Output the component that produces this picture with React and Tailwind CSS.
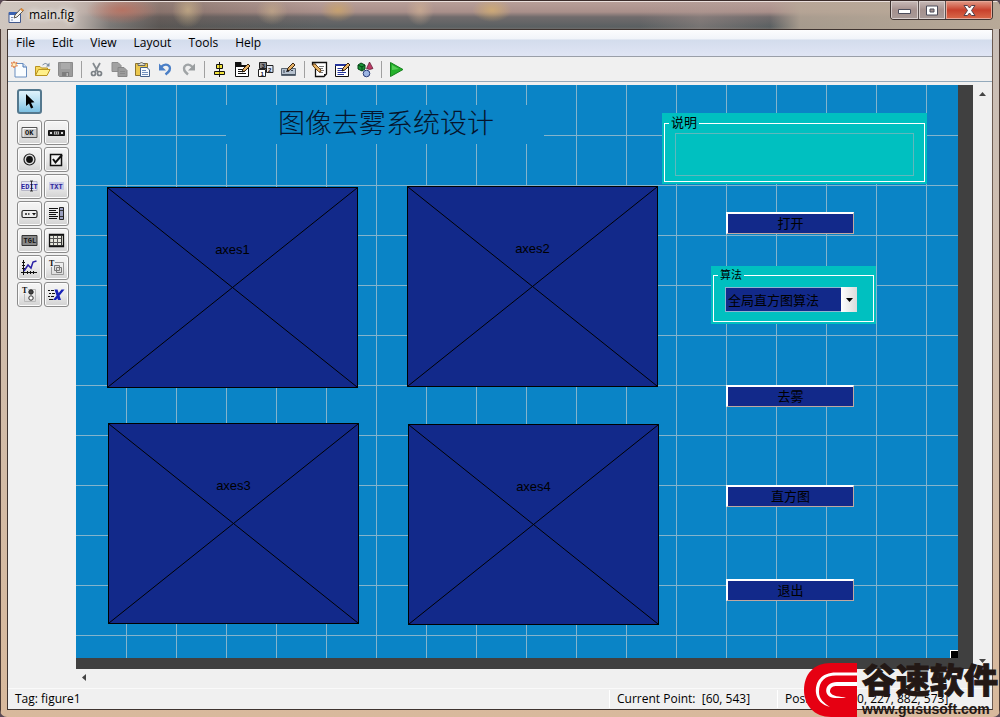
import React from "react";

const MENUS = ["File", "Edit", "View", "Layout", "Tools", "Help"];

function Icon({ children, size = 17 }) {
  return (
    <svg width={size} height={size} viewBox="0 0 17 17" fill="none" aria-hidden="true" className="shrink-0">
      {children}
    </svg>
  );
}

const Pencil = ({ x = 0, y = 0 }) => (
  <g transform={`translate(${x} ${y})`}>
    <path d="M1 9L2 6L7 1L9 3L4 8Z" fill="#e8b468" stroke="#3a2410" strokeWidth="1" />
    <path d="M1 9L1.5 7L3 8.5Z" fill="#111" />
  </g>
);

const ICONS = {
  new: (
    <Icon>
      <path d="M4 2.5H12L15.5 6V16H4Z" fill="#fafdff" stroke="#6a8fc0" />
      <path d="M12 2.5V6H15.5" fill="#d5e4f5" stroke="#4f78b4" />
      <path d="M3 .5L3.8 2.2L6 1.5L5 3.5L6.5 5L4 5L3 7L2.2 5L.3 5.3L1.3 3.5L.3 1.5L2.2 2.2Z" fill="#fff3c0" stroke="#df7a45" strokeWidth=".9" />
    </Icon>
  ),
  open: (
    <Icon>
      <path d="M1.5 14.5V5.5H6L7.5 7H13.5V9" fill="#f6d860" stroke="#b99420" />
      <path d="M1.5 14.5L4.5 8.5H16L13 14.5Z" fill="#fff08a" stroke="#b99420" />
      <path d="M8.5 4Q11 1 14 3.5" stroke="#7e8ea0" />
      <path d="M15.5 1.5V5.5H12Z" fill="#7e8ea0" />
    </Icon>
  ),
  save: (
    <Icon>
      <path d="M1.5 1.5H15.5V15.5H2.5L1.5 14.5Z" fill="#9c9c9c" stroke="#8b8b8b" />
      <path d="M4 2H13V8H4Z" fill="#ababab" />
      <path d="M5 11H12V15H5Z" fill="#7e7e7e" />
      <path d="M9.500 12H11V15H9.500Z" fill="#bbb" />
    </Icon>
  ),
  cut: (
    <Icon>
      <path d="M5 2L10 11M12 2L7 11" stroke="#858b90" strokeWidth="1.8" />
      <circle cx="5.500" cy="12.500" r="2" stroke="#7b8186" strokeWidth="1.700" />
      <circle cx="11.500" cy="12.500" r="2" stroke="#7b8186" strokeWidth="1.700" />
    </Icon>
  ),
  copy: (
    <Icon>
      <path d="M1 1.500H7L10 4.500V10.500H1Z" fill="#a2a2a2" stroke="#8c8c8c" />
      <path d="M7 6.500H13L16 9.500V15.500H7Z" fill="#9c9c9c" stroke="#868686" />
      <path d="M9 10.500H14M9 12.500H14" stroke="#8a8a8a" />
    </Icon>
  ),
  paste: (
    <Icon>
      <path d="M1.500 2.500H13.500V14.500H1.500Z" fill="#ecc84e" stroke="#8c7330" />
      <path d="M4 4.500V2.500H6L7.500 1L9 2.500H11V4.500Z" fill="#d8d8d0" stroke="#68685e" />
      <path d="M6.500 6.500H13L15.500 9V15.500H6.500Z" fill="#f7fbff" stroke="#46618b" />
      <path d="M8 9.500H12M8 11.500H14M8 13.500H14" stroke="#7390bd" />
    </Icon>
  ),
  undo: (
    <Icon>
      <path d="M4 6Q9 1.500 12.500 5.500Q14.500 9 8.500 13.500" stroke="#4b7fc6" strokeWidth="2.400" />
      <path d="M2 2.500V9.500H9Z" fill="#4b7fc6" />
    </Icon>
  ),
  redo: (
    <Icon>
      <path d="M12.500 6Q8 1.500 4.500 5.500Q2.500 9 8 13.500" stroke="#a0a4a6" strokeWidth="2.400" />
      <path d="M15 2.500V9.500H8Z" fill="#999d9f" />
    </Icon>
  ),
  align: (
    <Icon>
      <path d="M8.500 1V16" stroke="#111" />
      <path d="M5.500 3.500H11.500V7.500H5.500ZM3.500 10.500H13.500V13.500H3.500Z" fill="#f3e43c" stroke="#111" />
      <path d="M8.500 4V7M8.500 11V13" stroke="#6b6410" />
    </Icon>
  ),
  menuEdit: (
    <Icon>
      <path d="M1 1.500H7V4.500H14.500V15.500H1.500V1.500" fill="#fff" stroke="#111" />
      <path d="M1 2H7V5H14V6H1Z" fill="#111" />
      <path d="M4 8.500H9M4 10.500H11M4 12.500H12" stroke="#111" />
      <Pencil x={7} y={2} />
    </Icon>
  ),
  tab: (
    <Icon>
      <path d="M2.500 1.500H9.500V7.500H2.500Z" fill="#888" stroke="#222" />
      <path d="M9.500 4.500H16V11.500H9.500Z" fill="#e4eaf5" stroke="#222" />
      <path d="M1.500 8.500H8.500V15.500H1.500Z" fill="#fff" stroke="#222" />
      <text x="3.500" y="14.500" fill="#112" className="font-['Liberation_Sans'] text-[6px] font-bold">1</text>
      <text x="11" y="10.500" fill="#112" className="font-['Liberation_Sans'] text-[6px] font-bold">2</text>
      <text x="4.500" y="7" fill="#112" className="font-['Liberation_Sans'] text-[6px] font-bold">3</text>
    </Icon>
  ),
  toolbarEdit: (
    <Icon>
      <path d="M1.500 7.500H15.500V14.500H1.500Z" fill="#b7c2cf" stroke="#596572" />
      <path d="M2 13.500H15" stroke="#495561" />
      <path d="M4 9V12M6 10.500H9M11 9.500H13" stroke="#3d4856" />
      <Pencil x={6} y={1} />
    </Icon>
  ),
  mfile: (
    <Icon>
      <path d="M3.500 1.500H15.500V13L13 15.500H4.500V3.500H1.500V1.500Z" fill="#fff" stroke="#111" strokeWidth="1.300" />
      <path d="M13 15V13H15Z" fill="#111" />
      <path d="M8 5.500H13M8 7.500H12M8 9.500H13M8 11.500H12" stroke="#777" />
      <path d="M2 3L4 3L10 9L9.500 11L7.500 10.500L2 5Z" fill="#e6b566" stroke="#6c451a" />
    </Icon>
  ),
  property: (
    <Icon>
      <path d="M1.500 3.500H14.500V15.500H1.500Z" fill="#fff" stroke="#111" />
      <path d="M1 3H15V5H1Z" fill="#23349c" />
      <path d="M3.500 7.500H9M3.500 9.500H10M3.500 11.500H12M3.500 13.500H10" stroke="#23349c" />
      <Pencil x={7} y={1} />
    </Icon>
  ),
  objects: (
    <Icon>
      <path d="M1 4L4 2L8 4V8L5 10L1 8Z" fill="#189335" stroke="#064417" />
      <path d="M1 4L5 6L8 4M5 6V10" stroke="#064417" />
      <path d="M12.500 1L16 7.500Q12.500 9.500 9.500 7.500Z" fill="#bb3a65" stroke="#5b1830" strokeWidth=".7" />
      <circle cx="9.500" cy="12.500" r="3.300" fill="#9db6e4" stroke="#2b3e7b" />
    </Icon>
  ),
  run: (
    <Icon>
      <path d="M2.500 1.500L15 8.500L2.500 15.500Z" fill="#25b12c" stroke="#15811c" />
      <path d="M4 4L11 8L4 9Z" fill="#57cd56" />
    </Icon>
  ),
  arrow: (
    <Icon>
      <path d="M5 1V13L8 10.500L10 15.500L12.300 14.500L10 9.700L13.500 9.300Z" fill="#000" />
    </Icon>
  ),
  push: (
    <Icon>
      <path d="M1 3.500H16V13.500H1Z" fill="#ccc" stroke="#555" />
      <path d="M2 12.500V4.500H15" stroke="#fff" />
      <text x="4" y="11" fill="#111" className="font-['Liberation_Mono'] text-[7px] font-bold">OK</text>
    </Icon>
  ),
  slider: (
    <Icon>
      <path d="M.5 6.500H16.500V11.500H.5Z" fill="#222" stroke="#111" />
      <path d="M2 9H4M13 9H15" stroke="#ddd" strokeWidth="2" />
      <path d="M6 7.500H11V10.500H6Z" fill="#bbb" />
      <path d="M7.500 7.500V10.500M9.500 7.500V10.500" stroke="#555" />
    </Icon>
  ),
  radio: (
    <Icon>
      <circle cx="8.500" cy="8.500" r="5.500" fill="#ddd" stroke="#222" strokeWidth="1.200" />
      <circle cx="8.500" cy="8.500" r="3.400" fill="#111" />
    </Icon>
  ),
  check: (
    <Icon>
      <path d="M2.500 3.500H13.500V14.500H2.500Z" fill="#f5f5f5" stroke="#111" strokeWidth="1.500" />
      <path d="M5 8L7.500 11.500L14 4" stroke="#111" strokeWidth="2" />
    </Icon>
  ),
  edit: (
    <Icon>
      <path d="M.5 3.500H16V12.500H.5Z" fill="#e4e5f5" stroke="#b6b6c6" />
      <text x="0" y="11" fill="#2c249b" className="font-['Liberation_Mono'] text-[7px] font-bold">EDIT</text>
      <path d="M9 3H12M10.500 3V13M9 13H12" stroke="#111" strokeWidth=".8" />
    </Icon>
  ),
  text: (
    <Icon>
      <path d="M1 4H16V12H1Z" fill="#c9cae5" />
      <text x="2" y="11" fill="#2c249b" className="font-['Liberation_Mono'] text-[7px] font-bold">TXT</text>
    </Icon>
  ),
  popup: (
    <Icon>
      <rect x="1" y="5.500" width="15" height="7" rx="1.500" fill="#eee" stroke="#222" strokeWidth="1.200" />
      <path d="M4 9H6M7 9H8.500" stroke="#222" strokeWidth="1.500" />
      <path d="M11 8H15L13 10.500Z" fill="#111" />
    </Icon>
  ),
  list: (
    <Icon>
      <path d="M1 3.500H10M1 5.500H8M1 7.500H10M1 9.500H8M1 11.500H10M1 13.500H9" stroke="#111" />
      <path d="M11.500 2.500H15.500V14.500H11.500Z" fill="#9ba0bf" stroke="#222" />
      <path d="M12 5.500H15M12 11.500H15" stroke="#333" />
    </Icon>
  ),
  toggle: (
    <Icon>
      <path d="M1 3.500H16V13.500H1Z" fill="#888" stroke="#333" />
      <text x="2.500" y="11" fill="#111" className="font-['Liberation_Mono'] text-[7px] font-bold">TGL</text>
    </Icon>
  ),
  table: (
    <Icon>
      <path d="M1.500 2.500H15.500V14.500H1.500Z" fill="#e8e8df" stroke="#111" strokeWidth="1.300" />
      <path d="M5.500 3V14M9.500 3V14M2 6.500H13M2 10.500H13" stroke="#555" />
      <path d="M13.500 3V14M2 13.500H15M2 3.500H15" stroke="#333" />
    </Icon>
  ),
  axes: (
    <Icon>
      <path d="M2.500 1V16M0 13.500H16M1 3.500H4M1 6.500H4M1 9.500H4M6.500 12V15M9.500 12V15M12.500 12V15" stroke="#111" />
      <path d="M3 12L7 6L10 9L12 3L15.500 2" stroke="#2920a5" strokeWidth="1.500" />
    </Icon>
  ),
  panel: (
    <Icon>
      <path d="M7 3.500H15.500V15.500H3.500V8" stroke="#999" />
      <path d="M6.500 6.500H11.500V11.500H6.500ZM8.500 8.500H13.500V13.500H8.500Z" fill="#ddd" stroke="#777" />
      <text x="1" y="6.500" fill="#111" className="font-['Liberation_Serif'] text-[8px] font-bold">T</text>
    </Icon>
  ),
  group: (
    <Icon>
      <path d="M7 3.500H14.500V15.500H3.500V8" stroke="#bbb" />
      <circle cx="10" cy="6" r="2.200" fill="#444" stroke="#222" />
      <circle cx="10" cy="12" r="2.200" fill="#fff" stroke="#333" />
      <text x="1" y="6.500" fill="#111" className="font-['Liberation_Serif'] text-[8px] font-bold">T</text>
    </Icon>
  ),
  activex: (
    <Icon>
      <path d="M0 4.500H2M3 4.500H6M1 7.500H3M4 7.500H7M0 10.500H2M3 10.500H6M1 13.500H5" stroke="#111" strokeWidth="1.200" />
      <path d="M6.500 3.500H9.500L13 14H10ZM13.500 3.500H16.500L8 14H5Z" fill="#1822b8" />
    </Icon>
  ),
};

const TOOLBAR = [
  [["new", "New"], ["open", "Open"], ["save", "Save"]],
  [["cut", "Cut"], ["copy", "Copy"], ["paste", "Paste"], ["undo", "Undo"], ["redo", "Redo"]],
  [["align", "Align Objects"], ["menuEdit", "Menu Editor"], ["tab", "Tab Order Editor"], ["toolbarEdit", "Toolbar Editor"]],
  [["mfile", "M-file Editor"], ["property", "Property Inspector"], ["objects", "Object Browser"]],
  [["run", "Run Figure"]],
];

const PALETTE = [
  ["push", "Push Button"], ["slider", "Slider"],
  ["radio", "Radio Button"], ["check", "Check Box"],
  ["edit", "Edit Text"], ["text", "Static Text"],
  ["popup", "Pop-up Menu"], ["list", "Listbox"],
  ["toggle", "Toggle Button"], ["table", "Table"],
  ["axes", "Axes"], ["panel", "Panel"],
  ["group", "Button Group"], ["activex", "ActiveX Control"],
];

function TitleBar() {
  return (
    <header className="flex h-[29px] shrink-0 items-start justify-between border-t border-[#3b2c2a] bg-[radial-gradient(ellipse_36px_14px_at_122px_9px,#b96c5acc_0%,transparent_100%),radial-gradient(ellipse_16px_18px_at_188px_9px,#d0b78aaa_0%,transparent_100%),radial-gradient(ellipse_16px_14px_at_272px_10px,#cbb08a99_0%,transparent_100%),radial-gradient(ellipse_18px_12px_at_338px_9px,#d3a962aa_0%,transparent_100%),radial-gradient(ellipse_14px_16px_at_420px_9px,#d1b193aa_0%,transparent_100%),radial-gradient(ellipse_20px_12px_at_492px_9px,#d8b16ebb_0%,transparent_100%),linear-gradient(90deg,#cfc6bf_0,#c9beb7_70px,#a89c9466_110px,#57483f66_160px,transparent_320px),linear-gradient(180deg,transparent_15px,#b8a99800_15px,#b8a99800_100%),linear-gradient(90deg,transparent_640px,#b09c9555_700px,transparent_770px,#b8a998cc_800px,#b8a998_100%),linear-gradient(180deg,#b9a09a_0,#a98f8a_11px,#716b6c_16px,#5a6062_26px,#77716e_29px)] pl-2 pr-[7px] shadow-[inset_0_1px_0_#eadfdc]">
      <div className="flex h-full items-center gap-1 text-[12px] text-black">
        <svg width="17" height="17" viewBox="0 0 17 17" fill="none" aria-hidden="true">
          <path d="M1 5.500H12.500V15.500H1Z" fill="#f5f8ff" stroke="#42598c" />
          <path d="M1 5H13V8H1Z" fill="#3b62b0" />
          <path d="M3 10.500H5M3 13H5" stroke="#7a8db5" />
          <path d="M6 11L7 8L13 1.500L15.500 3.500L9 10Z" fill="#f4f1ea" stroke="#5c574f" />
          <path d="M12 2.500L13.500 1L16 3L14.500 4.500Z" fill="#dd8b3b" />
        </svg>
        <span className="[text-shadow:0_0_6px_#fff,0_0_6px_#fff]">main.fig</span>
      </div>
      <div className="flex h-[19px] overflow-hidden rounded-b-[4px] border border-t-0 border-[#3f3432]">
        <button aria-label="Minimize" className="flex w-[28px] items-center justify-center border-r border-[#5b504f] bg-linear-to-b from-[#c8bab8] via-[#a5918e] to-[#a99b98] shadow-[inset_0_0_0_1px_#d9cfcd]">
          <svg width="13" height="7" viewBox="0 0 13 7" aria-hidden="true"><path d="M.5 2.500H12.500V6.500H.5Z" fill="#fff" stroke="#4c4c5a" /></svg>
        </button>
        <button aria-label="Maximize" className="flex w-[27px] items-center justify-center border-r border-[#5b504f] bg-linear-to-b from-[#c8bab8] via-[#a5918e] to-[#a99b98] shadow-[inset_0_0_0_1px_#d9cfcd]">
          <svg width="13" height="11" viewBox="0 0 13 11" fill="none" aria-hidden="true">
            <path d="M.5 1H11.500V10H.5Z" fill="#fff" stroke="#4c4c5a" />
            <path d="M4 4H8V7H4Z" fill="#a5918e" stroke="#4c4c5a" />
          </svg>
        </button>
        <button aria-label="Close" className="flex w-[46px] items-center justify-center bg-linear-to-b from-[#e09a88] via-[#c8402c] to-[#d9694a] shadow-[inset_0_0_0_1px_#e8a898]">
          <svg width="13" height="11" viewBox="0 0 13 11" aria-hidden="true">
            <path d="M1 .5H4.500L6.500 3L8.500 .5H12L8.500 5.500L12 10.500H8.500L6.500 8L4.500 10.500H1L4.500 5.500Z" fill="#fff" stroke="#53404a" />
          </svg>
        </button>
      </div>
    </header>
  );
}

function Toolbar() {
  return (
    <div role="toolbar" aria-label="Editor" className="flex h-[25px] shrink-0 items-center border-b border-[#93a9bb] bg-[#f0f0f0] pl-[3px]">
      {TOOLBAR.map((group, i) => (
        <div key={i} className={i ? "ml-[7px] flex items-center gap-[6px] border-l border-[#a0a0a0] pl-[6px]" : "flex items-center gap-[6px]"}>
          {group.map(([id, label]) => (
            <button key={id} aria-label={label} className="block">{ICONS[id]}</button>
          ))}
        </div>
      ))}
    </div>
  );
}

const TOOL = "flex size-[25px] items-center justify-center rounded-[3px] border border-[#8b8b8b] bg-linear-to-b from-[#f5f5f5] via-[#ebebeb] to-[#d2d2d2] shadow-[inset_0_0_0_1px_#fcfcfc]";

function Palette() {
  return (
    <aside className="w-[68px] shrink-0 pl-[9px] pt-1">
      <button aria-label="Select" aria-pressed="true" className="flex size-[25px] items-center justify-center rounded-[3px] border-2 border-[#54788e] bg-linear-to-b from-[#dff2fb] via-[#b5def2] to-[#7cc0e2]">
        {ICONS.arrow}
      </button>
      <div className="mt-[6px] grid grid-cols-[25px_25px] gap-[2px]">
        {PALETTE.map(([id, label]) => (
          <button key={id} aria-label={label} className={TOOL}>{ICONS[id]}</button>
        ))}
      </div>
    </aside>
  );
}

function Axes({ name, place }) {
  return (
    <div className={`absolute flex h-[201px] w-[251px] justify-center border border-black bg-[#12298a] pt-[53px] ${place}`}>
      <svg className="absolute inset-0 size-full" viewBox="0 0 249 199" preserveAspectRatio="none" aria-hidden="true">
        <path d="M0 0L249 199M249 0L0 199" stroke="#000" />
      </svg>
      <span className="relative text-[13px] leading-[18px] text-black">{name}</span>
    </div>
  );
}

function PushButton({ children, place }) {
  return (
    <button className={`absolute h-[22px] w-[128px] border-t-2 border-l-2 border-r border-b border-t-white border-l-white border-r-[#c0a8a0] border-b-[#c0a8a0] bg-[#12298a] text-center text-[13px] leading-[18px] text-black ${place}`}>
      {children}
    </button>
  );
}

const COLS = Array.from({ length: 17 }, (_, i) => (i + 1) * 50);
const ROWS = Array.from({ length: 11 }, (_, i) => (i + 1) * 50);

function Figure() {
  return (
    <div className="relative h-[573px] w-[882px] shrink-0 overflow-hidden bg-[#0a84c6] font-['Liberation_Sans','Noto_Sans_CJK_SC',sans-serif]">
      <svg className="absolute inset-0" width="882" height="573" shapeRendering="crispEdges" aria-hidden="true">
        {COLS.map((x) => <path key={x} d={`M${x + 0.5} 0V573`} stroke="#84b4cc" />)}
        {ROWS.map((y) => <path key={y} d={`M0 ${y + 0.5}H882`} stroke="#84b4cc" />)}
      </svg>

      <h1 className="absolute top-[20px] left-[150px] h-[39px] w-[318px] bg-[#0a84c6] pl-[2px] text-center font-['Noto_Sans_CJK_SC',sans-serif] text-[27px] leading-[33px] font-light text-[#06142c]">
        图像去雾系统设计
      </h1>

      <Axes name="axes1" place="top-[102px] left-[31px]" />
      <Axes name="axes2" place="top-[101px] left-[331px]" />
      <Axes name="axes3" place="top-[338px] left-[32px]" />
      <Axes name="axes4" place="top-[339px] left-[332px]" />

      <div className="absolute top-[28px] left-[586px] h-[71px] w-[265px] bg-[#00c0c0] px-[2px] pb-[2px]">
        <fieldset className="h-full border border-white px-[10px] pb-[5px]">
          <legend className="-ml-[6px] px-[2px] text-[13px] leading-[20px] text-black">说明</legend>
          <div className="h-[43px] border border-[#5fb8bc]" />
        </fieldset>
      </div>

      <PushButton place="top-[127px] left-[650px]">打开</PushButton>

      <div className="absolute top-[181px] left-[635px] h-[58px] w-[165px] bg-[#00c0c0] px-[2px] pb-[2px]">
        <fieldset className="h-full border border-white px-[11px]">
          <legend className="-ml-[7px] px-[2px] text-[11px] leading-[18px] text-black">算法</legend>
          <div className="relative mt-[3px] h-[25px] w-[132px]">
            <select aria-label="算法" className="size-full appearance-none border border-[#8fb4d0] bg-[#12298a] pt-[2px] pl-[2px] text-[13px] leading-[20px] text-black">
              <option>全局直方图算法</option>
            </select>
            <span className="pointer-events-none absolute inset-y-0 right-0 flex w-[16px] items-center justify-center bg-linear-to-r from-white to-[#dcdcdc]">
              <svg width="7" height="4" viewBox="0 0 7 4" aria-hidden="true"><path d="M0 0H7L3.500 4Z" /></svg>
            </span>
          </div>
        </fieldset>
      </div>

      <PushButton place="top-[300px] left-[650px]">去雾</PushButton>
      <PushButton place="top-[400px] left-[650px]">直方图</PushButton>
      <PushButton place="top-[494px] left-[650px]">退出</PushButton>

      <span className="absolute right-0 bottom-0 size-[8px] border-t border-l border-white bg-black" />
    </div>
  );
}

function StatusBar() {
  return (
    <footer className="flex h-[21px] shrink-0 items-center bg-[#f0f0f0] text-[12px] whitespace-nowrap text-black shadow-[inset_0_1px_0_#fafafa]">
      <span className="flex-1 pl-[7px]">Tag: figure1</span>
      <span className="w-[168px] border-l border-white pl-[7px]">Current Point:&nbsp; [60, 543]</span>
      <span className="w-[215px] border-l border-white pl-[7px]">Position:&nbsp; [360, 227, 882, 573]</span>
    </footer>
  );
}

function Watermark() {
  return (
    <div className="pointer-events-none absolute right-0 bottom-0 flex h-[54px] w-[197px] gap-[4px]">
      <svg width="55" height="54" viewBox="0 0 55 54" fill="none" className="shrink-0" aria-hidden="true">
        <path d="M54 0H28C10 0 1 12 1 27C1 42 11 54 28 54H54Z" fill="#e60012" />
        <path d="M54 9.500H33C18 9.500 12 19 13 30C14 37 19 42 27 44C21 40 16 36 16 29C16 18 22 12.500 33 12.500H54Z" fill="#fff" />
        <path d="M54 19H34C20 19 20 35 32 35H43C37 33 29 34 27 29C27 24 30 23 34 23H54Z" fill="#fff" />
      </svg>
      <div className="font-['Liberation_Sans','Noto_Sans_CJK_SC',sans-serif] font-black whitespace-nowrap text-[#231815]">
        <div className="text-[34px] leading-[37px] [-webkit-text-stroke:1px_#231815]">谷速软件</div>
        <div className="text-[14px] leading-[18px] font-bold">www.gususoft.com</div>
      </div>
    </div>
  );
}

export default function App() {
  return (
    <div className="bg-[#5a4a55] font-['Open_Sans','Noto_Sans',sans-serif]">
      <div className="relative flex min-h-screen flex-col overflow-hidden rounded-[7px] bg-linear-to-b from-[#c9bfb8] to-[#d8b99c]">
        <TitleBar />
        <div className="flex flex-1 border-x border-[#4b3a34] px-[6px] pb-[7px]">
          <main className="flex min-w-0 flex-1 flex-col border border-[#3f3430] border-r-[#6b5a50] bg-[#f0f0f0]">
            <nav className="flex h-[27px] shrink-0 items-center gap-[17px] border-b border-[#9a9fa8] bg-[linear-gradient(180deg,#fdfdfe_0,#f1f4f9_9px,#d3dcec_10px,#e0e5f4_26px)] pl-2 text-[12px] text-black">
              {MENUS.map((m) => <button key={m}>{m}</button>)}
            </nav>
            <Toolbar />
            <div className="mt-[3px] flex flex-1">
              <Palette />
              <div className="flex min-w-0 flex-1 flex-col">
                <div className="flex flex-1">
                  <div className="min-w-0 flex-1 overflow-hidden bg-[#404040] pb-[11px]">
                    <Figure />
                  </div>
                  <div className="flex w-[19px] shrink-0 flex-col items-center justify-between pt-[7px] pb-[6px]">
                    <svg width="7" height="4" viewBox="0 0 7 4" aria-hidden="true"><path d="M0 4H7L3.500 0Z" fill="#444" /></svg>
                    <svg width="7" height="4" viewBox="0 0 7 4" aria-hidden="true"><path d="M0 0H7L3.500 4Z" fill="#444" /></svg>
                  </div>
                </div>
                <div className="flex h-[19px] shrink-0 items-center pl-[6px] pb-[2px]">
                  <svg width="4" height="7" viewBox="0 0 4 7" aria-hidden="true"><path d="M4 0V7L0 3.500Z" fill="#444" /></svg>
                </div>
              </div>
            </div>
            <StatusBar />
          </main>
        </div>
        <Watermark />
      </div>
    </div>
  );
}
